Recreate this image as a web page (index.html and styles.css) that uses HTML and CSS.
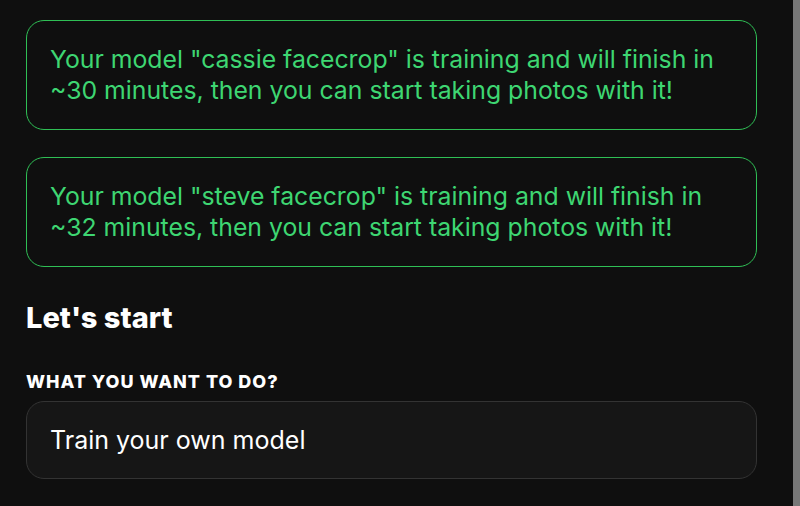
FILE: index.html
```html
<!DOCTYPE html>
<html lang="en">
<head>
<title>start</title>
<meta name="viewport" content="width=device-width, initial-scale=1.0">
<link rel="stylesheet" href="styles.css">
</head>
<body>
<div class="page">
  <div class="main">
    <div class="notice">Your model "cassie facecrop" is training and will finish in ~30 minutes, then you can start taking photos with it!</div>
    <div class="notice">Your model "steve facecrop" is training and will finish in ~32 minutes, then you can start taking photos with it!</div>

    <h2 class="title">Let's start</h2>
    <p class="label">WHAT YOU WANT TO DO?</p>
    <div class="select">Train your own model</div>
  </div>
  <div class="scrollbar"></div>
</div>
</body>
</html>
```

FILE: styles.css
```css
* {
  padding: 0;
  margin: 0;
  box-sizing: border-box;
}

html, body {
  height: 100%;
}

body {
  background-color: #0f0f0f;
  color: #fff;
  font-family: Inter, 'Noto Sans', sans-serif;
  overflow: hidden;
}

.page {
  display: flex;
  height: 100%;
}

.main {
  flex-grow: 1;
  display: flex;
  flex-direction: column;
  padding: 20px 36px 0 26px;
}

.scrollbar {
  width: 7px;
  flex-shrink: 0;
  background-color: #777;
}

.notice {
  border: 1px solid #2fbf55;
  border-radius: 18px;
  padding: 23px 23px;
  color: #3ed672;
  font-size: 24.8px;
  line-height: 31px;
  margin-bottom: 27px;
}

.title {
  font-size: 29px;
  line-height: 36px;
  font-weight: 800;
  margin-top: 6px;
}

.label {
  font-size: 18px;
  line-height: 22px;
  font-weight: 800;
  letter-spacing: 1px;
  margin-top: 35px;
}

.select {
  margin-top: 8px;
  height: 78px;
  display: flex;
  align-items: center;
  padding: 0 23px;
  background-color: #161616;
  border: 1px solid #333;
  border-radius: 18px;
  font-size: 25px;
}
```
